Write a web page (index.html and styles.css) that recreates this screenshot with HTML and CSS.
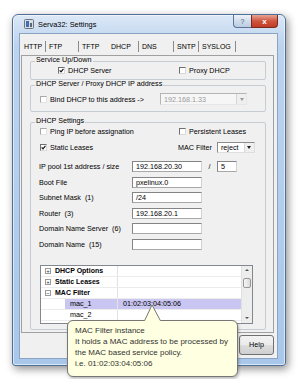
FILE: index.html
```html
<!DOCTYPE html>
<html lang="en">

<head>
  <meta charset="UTF-8">
  <meta name="viewport" content="width=device-width, initial-scale=1.0">
  <title>Serva32: Settings</title>
  <link rel="stylesheet" href="styles.css">
</head>

<body>
  <div class="window">
    <div class="titlebar">
      <svg class="app-icon" width="10" height="10" viewBox="0 0 10 10">
        <rect x="0.5" y="0.5" width="9" height="9" rx="1" fill="#d9dde3" stroke="#6b7582" />
        <rect x="2" y="2" width="3" height="6" fill="#3d6fb0" />
        <rect x="6" y="4" width="2" height="4" fill="#5b6470" />
      </svg>
      <span class="title">Serva32: Settings</span>
      <span class="cap-btn help">?</span>
      <span class="cap-btn close">x</span>
    </div>

    <div class="client">
      <!-- tabs -->
      <div class="tabs">
        <span class="tab">HTTP</span><span class="sep"></span>
        <span class="tab">FTP</span><span class="sep"></span>
        <span class="tab">TFTP</span>
        <span class="tab active">DHCP</span><span class="sep"></span>
        <span class="tab">DNS</span><span class="sep"></span>
        <span class="tab">SNTP</span><span class="sep"></span>
        <span class="tab">SYSLOG</span><span class="sep"></span>
      </div>

      <div class="panel">
        <div class="group g-service">
          <div class="group-title">Service Up/Down</div>
          <div class="row">
            <label class="check w-dhcp"><span class="box checked"><svg viewBox="0 0 5 5"><path d="M0.7 2.4 L2 3.8 L4.4 0.9" /></svg></span>DHCP Server</label>
            <label class="check"><span class="box"></span>Proxy DHCP</label>
          </div>
        </div>

        <div class="group g-bind">
          <div class="group-title">DHCP Server / Proxy DHCP IP address</div>
          <div class="row">
            <label class="check w-bind"><span class="box dim"></span>Bind DHCP to this address -&gt;</label>
            <div class="combo disabled"><span class="combo-text">192.168.1.33</span><span class="arrow"></span></div>
          </div>
        </div>

        <div class="group g-settings">
          <div class="group-title">DHCP Settings</div>
          <div class="row row-a">
            <label class="check w-ping"><span class="box dim"></span>Ping IP before assignation</label>
            <label class="check"><span class="box"></span>Persistent Leases</label>
          </div>
          <div class="row row-b">
            <label class="check w-static"><span class="box checked"><svg viewBox="0 0 5 5"><path d="M0.7 2.4 L2 3.8 L4.4 0.9" /></svg></span>Static Leases</label>
            <span class="mac-label">MAC Filter</span>
            <div class="combo select"><span class="combo-text">reject</span><span class="arrow"></span></div>
          </div>

          <div class="fields">
            <div class="field">
              <span class="field-label">IP pool 1st address / size</span>
              <span class="input">192.168.20.30</span>
              <span class="slash">/</span>
              <span class="input small">5</span>
            </div>
            <div class="field">
              <span class="field-label">Boot File</span>
              <span class="input">pxelinux.0</span>
            </div>
            <div class="field">
              <span class="field-label">Subnet Mask &nbsp;(1)</span>
              <span class="input">/24</span>
            </div>
            <div class="field">
              <span class="field-label">Router &nbsp;(3)</span>
              <span class="input">192.168.20.1</span>
            </div>
            <div class="field">
              <span class="field-label">Domain Name Server &nbsp;(6)</span>
              <span class="input"></span>
            </div>
            <div class="field">
              <span class="field-label">Domain Name &nbsp;(15)</span>
              <span class="input"></span>
            </div>
          </div>

          <div class="grid">
            <div class="grid-rows">
              <div class="prow cat">
                <div class="pname"><span class="plus">+</span>DHCP Options</div>
                <div class="pval"></div>
              </div>
              <div class="prow cat">
                <div class="pname"><span class="plus">+</span>Static Leases</div>
                <div class="pval"></div>
              </div>
              <div class="prow cat">
                <div class="pname"><span class="plus">−</span>MAC Filter</div>
                <div class="pval"></div>
              </div>
              <div class="prow prop sel">
                <div class="pname">mac_1</div>
                <div class="pval">01:02:03:04:05:06</div>
              </div>
              <div class="prow prop">
                <div class="pname">mac_2</div>
                <div class="pval"></div>
              </div>
              <div class="prow prop">
                <div class="pname"></div>
                <div class="pval"></div>
              </div>
            </div>
            <div class="scroll">
              <span class="sb-btn up"></span>
              <span class="thumb"></span>
              <span class="sb-btn down"></span>
            </div>
          </div>
        </div>
      </div>

      <div class="buttons">
        <span class="btn">Help</span>
      </div>
    </div>
  </div>

  <!-- balloon tooltip over the property grid -->
  <div class="tooltip">
    MAC Filter instance<br>
    It holds a MAC address to be processed by<br>
    the MAC based service policy.<br>
    i.e. 01:02:03:04:05:06
  </div>
  <svg class="tip-pointer" width="24" height="18" viewBox="0 0 24 18">
    <polygon points="4,17.6 12,1 21,17.6" fill="#ffffe1" />
    <polyline points="4.5,16.8 12,1 20.5,16.8" fill="none" stroke="#767676" stroke-width="1" />
  </svg>
</body>

</html>
```

FILE: styles.css
```css
body {
  margin: 0;
  width: 300px;
  height: 379px;
  overflow: hidden;
  position: relative;
  background: #fff;
  font-family: "Liberation Sans", Arial, sans-serif;
  font-size: 7.2px;
  color: #000;
}

.window {
  box-sizing: border-box;
  width: 274px;
  height: 352px;
  margin: 14px 0 0 12px;
  padding: 0 7px 6px 6px;
  display: flex;
  flex-direction: column;
  border: 1px solid #4f6f97;
  border-radius: 6px 6px 3px 3px;
  background: linear-gradient(to bottom, #dce8f6, #bcd3ee 30px, #a9c7ea);
  box-shadow: 2px 3px 8px rgba(0, 0, 0, 0.45), inset 0 0 0 1px rgba(255, 255, 255, 0.55);
}

.titlebar {
  height: 18px;
  display: flex;
  align-items: center;
}

.app-icon {
  margin-left: 5px;
  flex: none;
}

.title {
  margin-left: 4px;
  font-size: 7.4px;
  color: #000;
}

.cap-btn {
  align-self: flex-start;
  box-sizing: border-box;
  height: 13px;
  display: flex;
  align-items: center;
  justify-content: center;
  border: 1px solid #5b7498;
  border-top: none;
}

.cap-btn.help {
  margin-left: auto;
  width: 18px;
  border-radius: 0 0 0 4px;
  border-right: none;
  background: linear-gradient(#eef3fa, #cfdcec 50%, #bccde3);
  color: #4a5a70;
  font-size: 7px;
}

.cap-btn.close {
  width: 27px;
  border-radius: 0 0 4px 0;
  border-color: #7c2a20;
  background: linear-gradient(#e8a496, #d0553f 50%, #c03c26);
  color: #fff;
  font-weight: bold;
  font-size: 8px;
}

.client {
  flex: 1;
  display: flex;
  flex-direction: column;
  padding: 4px 3px 0 1px;
  background: #f0f0f0;
  border: 1px solid #8aa4c4;
}

/* tab strip */
.tabs {
  height: 17px;
  display: grid;
  grid-template-columns: 24px 1px 32px 1px 29px 30px 1px 34px 1px 24px 1px 36px 1px;
  align-items: center;
}

.tab {
  padding-left: 3px;
  line-height: 17px;
  font-size: 7px;
  white-space: nowrap;
}

.sep {
  height: 11px;
  background: #8a8a8a;
}

.panel {
  padding: 0 7px 2px 8px;
  border: 1px solid #a0a0a0;
  background: #f0f0f0;
}

/* group boxes */
.group {
  border: 1px solid #c6ccd3;
  border-radius: 2px;
}

.group-title {
  width: fit-content;
  margin: -6px 0 0 4px;
  padding: 0 1px;
  line-height: 8px;
  background: #f0f0f0;
  white-space: nowrap;
}

.row {
  display: flex;
  align-items: center;
  padding-left: 9px;
}

.check {
  display: flex;
  align-items: center;
  flex: none;
  white-space: nowrap;
}

.box {
  box-sizing: border-box;
  width: 7px;
  height: 7px;
  margin-right: 3px;
  display: flex;
  background: #fff;
  border: 1px solid;
  border-color: #6f6f6f #d8d8d8 #d8d8d8 #6f6f6f;
}

.box.dim {
  border-color: #a9a9a9 #e2e2e2 #e2e2e2 #a9a9a9;
}

.box svg {
  width: 5px;
  height: 5px;
}

.box path {
  fill: none;
  stroke: #111;
  stroke-width: 1.2;
}

.g-service {
  margin-top: 5px;
  padding-bottom: 4px;
}

.g-service .row {
  margin-top: 1px;
  height: 10px;
  padding-left: 27px;
}

.w-dhcp {
  width: 121px;
}

.g-bind {
  margin-top: 5px;
  padding-bottom: 6px;
}

.g-bind .row {
  margin-top: 5px;
  height: 12px;
}

.w-bind {
  width: 120px;
}

.combo {
  box-sizing: border-box;
  height: 12px;
  display: flex;
  align-items: center;
  border: 1px solid;
  border-color: #8c8c8c #dedede #dedede #8c8c8c;
  background: #fff;
}

.combo.disabled {
  width: 87px;
  border-color: #b4b4b4 #e6e6e6 #e6e6e6 #b4b4b4;
  background: #f6f6f6;
  color: #9a9a9a;
}

.combo-text {
  flex: 1;
  padding-left: 3px;
}

.arrow {
  width: 9px;
  height: 100%;
  display: flex;
  align-items: center;
  justify-content: center;
  border-left: 1px solid #d6d6d6;
  background: #efefef;
}

.arrow::after {
  content: "";
  border-top: 3px solid #222;
  border-left: 2.5px solid transparent;
  border-right: 2.5px solid transparent;
}

.disabled .arrow::after {
  border-top-color: #9a9a9a;
}

.g-settings {
  margin-top: 10px;
  padding-bottom: 5px;
}

.row-a {
  margin-top: 1px;
  height: 10px;
}

.w-ping {
  width: 139px;
}

.row-b {
  margin-top: 6px;
  height: 11px;
}

.w-static {
  width: 138px;
}

.mac-label {
  margin-right: 5px;
  white-space: nowrap;
}

.combo.select {
  width: 38px;
  height: 11px;
}

/* text fields */
.fields {
  margin-top: 8px;
  padding-left: 8px;
  display: flex;
  flex-direction: column;
  gap: 4.6px;
}

.field {
  height: 11px;
  display: flex;
  align-items: center;
}

.field-label {
  width: 93px;
  white-space: pre;
}

.input {
  box-sizing: border-box;
  width: 70px;
  height: 11px;
  padding-left: 3px;
  line-height: 9px;
  background: #fff;
  border: 1px solid;
  border-color: #848484 #d2d2d2 #a8a8a8 #848484;
}

.input.small {
  width: 20px;
}

.slash {
  width: 15px;
  text-align: center;
}

/* property grid */
.grid {
  width: 213px;
  height: 59px;
  box-sizing: border-box;
  margin: 15px 0 0 9px;
  display: flex;
  overflow: hidden;
  border: 1px solid #828790;
  background: #fff;
}

.grid-rows {
  flex: 1;
}

.prow {
  box-sizing: border-box;
  height: 11px;
  display: flex;
  align-items: center;
  border-bottom: 1px solid #ececec;
}

.pname {
  width: 76px;
  display: flex;
  align-items: center;
  white-space: nowrap;
}

.pval {
  flex: 1;
  height: 100%;
  padding-left: 5px;
  display: flex;
  align-items: center;
  border-left: 1px solid #e2e2e2;
}

.cat .pname {
  font-weight: bold;
  font-size: 7px;
}

.plus {
  box-sizing: border-box;
  width: 6px;
  height: 6px;
  margin: 0 4px 0 4px;
  display: flex;
  align-items: center;
  justify-content: center;
  border: 1px solid #9a9a9a;
  font-size: 6px;
  font-weight: normal;
  line-height: 4px;
  color: #333;
}

.prop .pname {
  padding-left: 29px;
  box-sizing: border-box;
}

.prow.sel {
  background: linear-gradient(to right, #fff 24px, #c9c6f1 24px);
}

.scroll {
  width: 10px;
  display: flex;
  flex-direction: column;
  align-items: center;
  background: #ededed;
  border-left: 1px solid #e0e0e0;
}

.sb-btn {
  height: 9px;
  width: 100%;
  display: flex;
  align-items: center;
  justify-content: center;
}

.sb-btn.up::after {
  content: "";
  border-bottom: 2px solid #555;
  border-left: 2px solid transparent;
  border-right: 2px solid transparent;
}

.sb-btn.down {
  margin-top: auto;
}

.sb-btn.down::after {
  content: "";
  border-top: 2px solid #555;
  border-left: 2px solid transparent;
  border-right: 2px solid transparent;
}

.thumb {
  box-sizing: border-box;
  width: 8px;
  height: 10px;
  margin-top: 3px;
  border: 1px solid #979797;
  border-radius: 2px;
  background: linear-gradient(to right, #f6f6f6, #dadada);
}

/* dialog buttons */
.buttons {
  margin-top: 2px;
  display: flex;
  justify-content: flex-end;
}

.btn {
  box-sizing: border-box;
  width: 35px;
  height: 20px;
  display: flex;
  align-items: center;
  justify-content: center;
  border: 1px solid #707070;
  border-radius: 3px;
  background: linear-gradient(#f2f2f2, #ebebeb 50%, #dddddd 50%, #cfcfcf);
}

/* balloon tooltip */
.tooltip {
  position: absolute;
  left: 67px;
  top: 320px;
  box-sizing: border-box;
  width: 171px;
  height: 57px;
  padding: 4px 0 0 7px;
  border: 1px solid #767676;
  border-radius: 6px;
  background: #ffffe1;
  box-shadow: 1px 2px 3px rgba(0, 0, 0, 0.25);
  font-size: 8px;
  line-height: 11px;
  color: #333;
  white-space: nowrap;
}

.tip-pointer {
  position: absolute;
  left: 140px;
  top: 304px;
}
```
